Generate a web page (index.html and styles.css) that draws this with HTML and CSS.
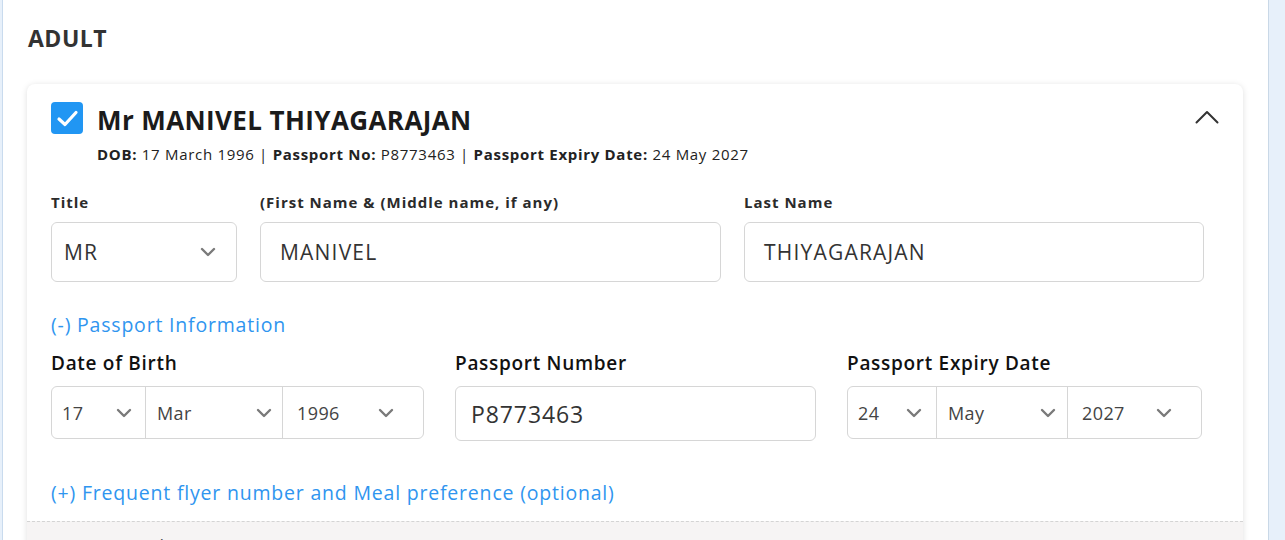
FILE: index.html
```html
<!DOCTYPE html>
<html lang="en">
<head>
<meta charset="utf-8">
<title>Adult passenger</title>
<link rel="stylesheet" href="styles.css">
</head>
<body>
<div class="page">
  <div class="panel">
    <h2 class="section-title">ADULT</h2>
    <div class="card">
      <div class="card-head">
        <span class="check">
          <svg width="32" height="32" viewBox="0 0 32 32"><path d="M8 17l6 5.5L25 10.5" fill="none" stroke="#fff" stroke-width="3.2" stroke-linecap="round" stroke-linejoin="round"/></svg>
        </span>
        <div class="head-text">
          <div class="pax-name">Mr MANIVEL THIYAGARAJAN</div>
          <div class="pax-meta"><b>DOB:</b> 17 March 1996 | <b>Passport No:</b> P8773463 | <b>Passport Expiry Date:</b> 24 May 2027</div>
        </div>
        <svg class="collapse" width="24" height="14" viewBox="0 0 24 14"><path d="M1.5 12.5L12 2l10.5 10.5" fill="none" stroke="#333" stroke-width="2" stroke-linecap="round" stroke-linejoin="round"/></svg>
      </div>

      <div class="card-body">
        <div class="name-grid">
          <div class="field">
            <div class="label">Title</div>
            <div class="box select-box">
              <span>MR</span>
              <svg class="chev" width="16" height="10" viewBox="0 0 16 10"><path d="M2 2l6 6 6-6" fill="none" stroke="#7a7a7a" stroke-width="2.4" stroke-linecap="round" stroke-linejoin="round"/></svg>
            </div>
          </div>
          <div class="field">
            <div class="label">(First Name &amp; (Middle name, if any)</div>
            <div class="box text-box">MANIVEL</div>
          </div>
          <div class="field">
            <div class="label">Last Name</div>
            <div class="box text-box">THIYAGARAJAN</div>
          </div>
        </div>

        <div class="toggle toggle-passport">(-) Passport Information</div>

        <div class="passport-grid">
          <div class="field">
            <div class="label-lg">Date of Birth</div>
            <div class="date-group">
              <div class="seg seg-day"><span>17</span><svg class="chev" width="16" height="10" viewBox="0 0 16 10"><path d="M2 2l6 6 6-6" fill="none" stroke="#7a7a7a" stroke-width="2.4" stroke-linecap="round" stroke-linejoin="round"/></svg></div>
              <div class="seg seg-month"><span>Mar</span><svg class="chev" width="16" height="10" viewBox="0 0 16 10"><path d="M2 2l6 6 6-6" fill="none" stroke="#7a7a7a" stroke-width="2.4" stroke-linecap="round" stroke-linejoin="round"/></svg></div>
              <div class="seg seg-year"><span>1996</span><svg class="chev" width="16" height="10" viewBox="0 0 16 10"><path d="M2 2l6 6 6-6" fill="none" stroke="#7a7a7a" stroke-width="2.4" stroke-linecap="round" stroke-linejoin="round"/></svg></div>
            </div>
          </div>
          <div class="field">
            <div class="label-lg">Passport Number</div>
            <div class="box passport-box">P8773463</div>
          </div>
          <div class="field">
            <div class="label-lg">Passport Expiry Date</div>
            <div class="date-group">
              <div class="seg seg-day"><span>24</span><svg class="chev" width="16" height="10" viewBox="0 0 16 10"><path d="M2 2l6 6 6-6" fill="none" stroke="#7a7a7a" stroke-width="2.4" stroke-linecap="round" stroke-linejoin="round"/></svg></div>
              <div class="seg seg-month"><span>May</span><svg class="chev" width="16" height="10" viewBox="0 0 16 10"><path d="M2 2l6 6 6-6" fill="none" stroke="#7a7a7a" stroke-width="2.4" stroke-linecap="round" stroke-linejoin="round"/></svg></div>
              <div class="seg seg-year"><span>2027</span><svg class="chev" width="16" height="10" viewBox="0 0 16 10"><path d="M2 2l6 6 6-6" fill="none" stroke="#7a7a7a" stroke-width="2.4" stroke-linecap="round" stroke-linejoin="round"/></svg></div>
            </div>
          </div>
        </div>

        <div class="toggle toggle-ff">(+) Frequent flyer number and Meal preference (optional)</div>
      </div>

      <div class="card-foot">
        <div class="foot-text">GST (optional)</div>
      </div>
    </div>
  </div>
</div>
</body>
</html>
```

FILE: styles.css
```css
* { box-sizing: border-box; }

html, body {
  margin: 0;
  padding: 0;
  height: 100%;
  overflow: hidden;
}

body {
  background: #e7f0fa;
  font-family: "Open Sans", "DejaVu Sans", sans-serif;
  color: #222;
}

.page {
  padding-left: 2px;
  height: 100%;
}

.panel {
  width: 1267px;
  height: 100%;
  background: #fff;
  border-left: 1px solid #c9dbee;
  border-right: 1px solid #c9d8e7;
  padding: 23px 24px 0 24px;
}

.section-title {
  margin: 0 0 31px 0;
  font-size: 23px;
  line-height: 30px;
  font-weight: 700;
  letter-spacing: 0.5px;
  color: #333;
  padding-left: 1px;
}

.card {
  width: 1216px;
  background: #fff;
  border-radius: 8px;
  box-shadow: 0 1px 6px rgba(0, 0, 0, 0.13);
  overflow: hidden;
}

.card-head {
  display: flex;
  align-items: flex-start;
  padding: 18px 24px 0 24px;
}

.check {
  width: 32px;
  height: 32px;
  border-radius: 4px;
  background: #2196f3;
  flex: none;
  display: flex;
}

.head-text {
  margin-left: 14px;
}

.pax-name {
  font-size: 26px;
  line-height: 36px;
  font-weight: 700;
  letter-spacing: 0.4px;
  color: #1b1b1b;
}

.pax-meta {
  margin-top: 4px;
  font-size: 15px;
  line-height: 24px;
  letter-spacing: 0.7px;
  color: #222;
}

.pax-meta b { font-weight: 700; }

.collapse {
  margin-left: auto;
  margin-top: 8px;
  flex: none;
}

.card-body {
  padding: 0 24px 15px 24px;
}

.name-grid {
  display: grid;
  grid-template-columns: 186px 461px 460px;
  column-gap: 23px;
  margin-top: 26px;
}

.field {
  display: flex;
  flex-direction: column;
}

.label {
  font-size: 15px;
  line-height: 20px;
  font-weight: 700;
  letter-spacing: 1px;
  color: #2b2b2b;
  margin-bottom: 10px;
}

.box {
  border: 1px solid #d6d6d6;
  border-radius: 6px;
  display: flex;
  align-items: center;
  color: #333;
}

.select-box {
  height: 60px;
  padding: 0 20px 0 12px;
  justify-content: space-between;
  font-size: 21px;
  letter-spacing: 1px;
}

.text-box {
  height: 60px;
  padding-left: 19px;
  font-size: 21px;
  letter-spacing: 1.2px;
}

.toggle {
  color: #2f95ef;
  font-size: 19.5px;
  line-height: 26px;
  letter-spacing: 0.8px;
}

.toggle-passport { margin-top: 30px; }

.passport-grid {
  display: grid;
  grid-template-columns: 373px 361px 355px;
  column-gap: 31px;
  margin-top: 13px;
  align-items: start;
}

.label-lg {
  font-size: 19px;
  line-height: 24px;
  font-weight: 600;
  letter-spacing: 0.7px;
  color: #111;
  margin-bottom: 11px;
}

.date-group {
  display: flex;
  height: 53px;
  border: 1px solid #d6d6d6;
  border-radius: 6px;
  color: #444;
  font-size: 18px;
  letter-spacing: 0.4px;
}

.seg {
  display: flex;
  align-items: center;
  justify-content: space-between;
  border-left: 1px solid #d6d6d6;
}

.seg:first-child { border-left: none; }

.seg-day { flex: 0 0 93px; padding: 0 13px 0 10px; }
.seg-month { flex: 0 0 137px; padding: 0 10px 0 11px; }
.seg-year { flex: 1 1 auto; padding: 0 29px 0 14px; }

.passport-grid .field:last-child .seg-day { flex-basis: 88px; padding-right: 14px; }
.passport-grid .field:last-child .seg-month { flex-basis: 131px; padding-right: 11px; }

.chev { flex: none; }

.passport-box {
  height: 55px;
  padding-left: 15px;
  font-size: 23px;
  letter-spacing: 0.9px;
}

.toggle-ff { margin-top: 39px; }

.card-foot {
  border-top: 1px dashed #d4d4d4;
  background: #f6f4f4;
  padding: 11px 24px 20px 25px;
}

.foot-text {
  font-size: 18px;
  line-height: 26px;
  color: #555;
}
```
